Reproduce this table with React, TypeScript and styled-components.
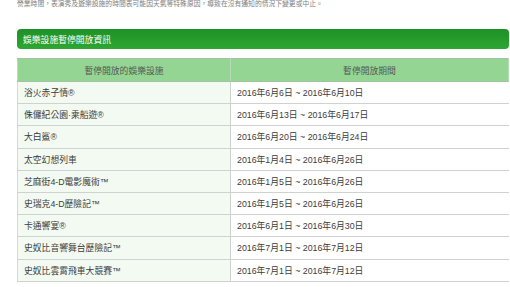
import React from "react";
import styled, { createGlobalStyle } from "styled-components";

type ClosureRow = {
  ride: string;
  period: string;
};

const ROWS: ClosureRow[] = [
  { ride: "浴火赤子情®", period: "2016年6月6日 ~ 2016年6月10日" },
  { ride: "侏儸紀公園·乘船遊®", period: "2016年6月13日 ~ 2016年6月17日" },
  { ride: "大白鯊®", period: "2016年6月20日 ~ 2016年6月24日" },
  { ride: "太空幻想列車", period: "2016年1月4日 ~ 2016年6月26日" },
  { ride: "芝麻街4-D電影魔術™", period: "2016年1月5日 ~ 2016年6月26日" },
  { ride: "史瑞克4-D歷險記™", period: "2016年1月5日 ~ 2016年6月26日" },
  { ride: "卡通響宴®", period: "2016年6月1日 ~ 2016年6月30日" },
  { ride: "史奴比音響舞台歷險記™", period: "2016年7月1日 ~ 2016年7月12日" },
  { ride: "史奴比雲霄飛車大競賽™", period: "2016年7月1日 ~ 2016年7月12日" },
];

function App() {
  return (
    <>
      <GlobalStyle />
      <StyledPage>
        <StyledNotice>
          營業時間，表演秀及遊樂設施的時間表可能因天氣等特殊原因，導致在沒有通知的情況下變更或中止。
        </StyledNotice>
        <StyledTitleBar>娛樂設施暫停開放資訊</StyledTitleBar>
        <StyledTable>
          <thead>
            <tr>
              <StyledHeadCell>暫停開放的娛樂設施</StyledHeadCell>
              <StyledHeadCell>暫停開放期間</StyledHeadCell>
            </tr>
          </thead>
          <tbody>
            {ROWS.map((row) => (
              <StyledRow key={row.ride}>
                <StyledCell $shaded>{row.ride}</StyledCell>
                <StyledCell>{row.period}</StyledCell>
              </StyledRow>
            ))}
          </tbody>
        </StyledTable>
      </StyledPage>
    </>
  );
}

export default App;

const GlobalStyle = createGlobalStyle`
  html,
  body {
    margin: 0;
    padding: 0;
    background: #ffffff;
  }

  body {
    font-family: "Liberation Sans", "Noto Sans CJK TC", sans-serif;
    color: #3c3c3c;
  }
`;

const StyledPage = styled.div`
  width: 510px;
  height: 287px;
  overflow: hidden;
  box-sizing: border-box;
  padding: 0 1px 0 17px;
`;

const StyledNotice = styled.p`
  margin: 0;
  font-size: 6.8px;
  line-height: 8px;
  color: #7e7e7e;
  white-space: nowrap;
`;

const StyledTitleBar = styled.div`
  margin-top: 21px;
  height: 20px;
  padding-left: 6px;
  display: flex;
  align-items: center;
  border-radius: 4px;
  background: linear-gradient(#1e9126, #2ea733);
  color: #ffffff;
  font-size: 8.8px;
`;

const StyledTable = styled.table`
  margin-top: 9px;
  width: 100%;
  border-collapse: collapse;
  table-layout: fixed;
  font-size: 8.8px;

  th:first-child,
  td:first-child {
    width: 212px;
  }
`;

const StyledHeadCell = styled.th`
  height: 22px;
  padding: 0;
  font-weight: 400;
  color: #555555;
  text-align: center;
  background: #94d594;
  border-top: 1px solid #a3c3a3;
  border-bottom: 1px solid #a3c3a3;
  border-left: 1px solid #b5dcb5;
  border-right: 1px solid #b5dcb5;
`;

const StyledRow = styled.tr`
  height: 22.2px;
`;

const StyledCell = styled.td<{ $shaded?: boolean }>`
  padding: 0 0 0 6px;
  white-space: nowrap;
  color: #3c3c3c;
  background: ${({ $shaded }) => ($shaded ? "#f2faf2" : "#ffffff")};
  border-bottom: 1px solid #cfd3cf;
  border-left: 1px solid ${({ $shaded }) => ($shaded ? "#c8e3c8" : "#cfd3cf")};
`;
